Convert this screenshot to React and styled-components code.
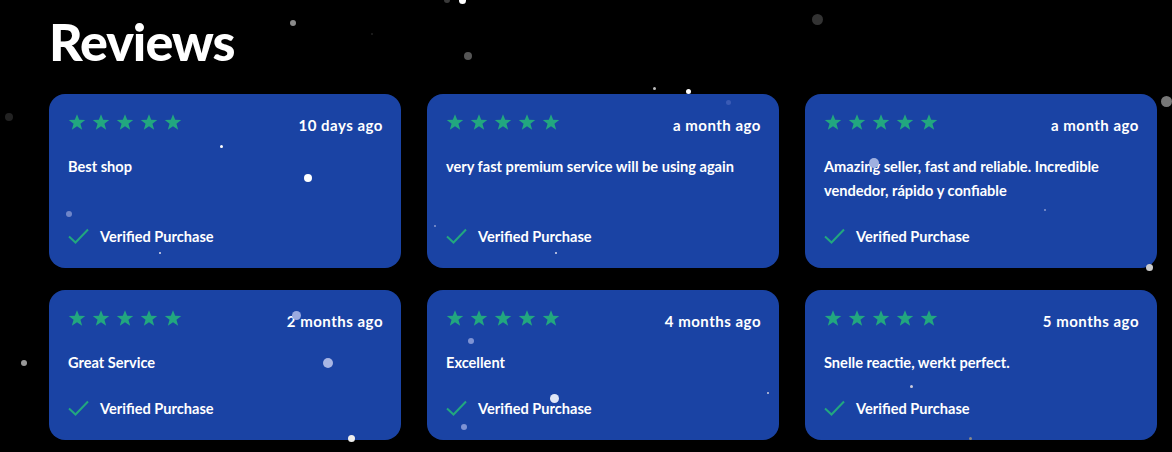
import React from "react";
import styled, { createGlobalStyle } from "styled-components";

const GlobalStyle = createGlobalStyle`
  html, body {
    margin: 0;
    background: #000;
  }
  body {
    font-family: "Lato", "Liberation Sans", sans-serif;
    color: #fff;
  }
`;

const reviews = [
  { date: "10 days ago", text: "Best shop" },
  { date: "a month ago", text: "very fast premium service will be using again" },
  { date: "a month ago", text: "Amazing seller, fast and reliable. Incredible vendedor, rápido y confiable" },
  { date: "2 months ago", text: "Great Service" },
  { date: "4 months ago", text: "Excellent" },
  { date: "5 months ago", text: "Snelle reactie, werkt perfect." },
];

// x, y, size, colour of the floating particles
const dots = [
  [293, 23, 6, "#8a8a8a"], [447, 0, 6, "#3a3a3a"], [462, 0, 7, "#fff"],
  [468, 56, 8, "#555"], [817, 19, 11, "#333"], [9, 117, 8, "#222"],
  [221, 146, 3, "#fff"], [308, 178, 8, "#fff"], [69, 214, 6, "#6f86c9"],
  [160, 253, 2, "#dde"], [654, 88, 3, "#bbb"], [688, 91, 5, "#fff"],
  [728, 102, 5, "#3a5bb5"], [874, 163, 10, "#9fb0e0"], [1166, 101, 11, "#777"],
  [1149, 267, 7, "#ccc"], [1045, 210, 2, "#8898d0"], [556, 253, 2, "#dde"],
  [296, 315, 9, "#9aaae0"], [328, 363, 10, "#a8b6e4"], [24, 363, 6, "#999"],
  [351, 438, 7, "#eee"], [471, 341, 6, "#7e93d4"], [554, 398, 9, "#dfe6f7"],
  [464, 427, 6, "#7e93d4"], [768, 393, 2, "#ccd"], [911, 386, 3, "#ccd"],
  [970, 438, 3, "#888"], [435, 226, 2, "#8898d0"], [372, 34, 2, "#222"],
];

const Page = styled.div`
  position: relative;
  min-height: 452px;
  padding: 10px 15px 0 49px;
  box-sizing: border-box;
  overflow: hidden;
`;

const Title = styled.h1`
  margin: 0 0 22px;
  font-size: 52px;
  line-height: 62px;
  font-weight: 900;
  letter-spacing: -1px;
  color: #fff;
`;

const Grid = styled.div`
  display: grid;
  grid-template-columns: repeat(3, 352px);
  column-gap: 26px;
  row-gap: 22px;
`;

const Card = styled.div`
  display: flex;
  flex-direction: column;
  padding: 18px 18px 22px 19px;
  border-radius: 16px;
  background: #1a43a4;
`;

const Header = styled.div`
  display: flex;
  align-items: center;
  justify-content: space-between;
  height: 20px;
`;

const Stars = styled.div`
  display: flex;
  gap: 6px;
`;

const DateText = styled.span`
  font-size: 15px;
  font-weight: 700;
  letter-spacing: 0.5px;
  margin-top: 5px;
`;

const Body = styled.p`
  margin: 23px 0 23px;
  font-size: 14.6px;
  line-height: 24px;
  font-weight: 700;
`;

const Verified = styled.div`
  display: flex;
  align-items: center;
  gap: 11px;
  margin-top: auto;
  height: 20px;
  font-size: 14.6px;
  font-weight: 700;
`;

const Dot = styled.span`
  position: absolute;
  border-radius: 50%;
  pointer-events: none;
`;

const Star = () => (
  <svg width="18" height="18" viewBox="0 0 24 24">
    <path
      fill="#22a77f"
      d="M12 1.5l2.9 7.6 8.1.3-6.4 5 2.3 7.9L12 17.7l-6.9 4.6 2.3-7.9-6.4-5 8.1-.3z"
    />
  </svg>
);

const Check = () => (
  <svg width="21" height="16" viewBox="0 0 21 16">
    <path d="M1 8.5l6.5 6L20 1.5" fill="none" stroke="#22a77f" strokeWidth="2" />
  </svg>
);

export default function App() {
  return (
    <Page>
      <GlobalStyle />
      <Title>Reviews</Title>
      <Grid>
        {reviews.map((r, i) => (
          <Card key={i}>
            <Header>
              <Stars>
                {[0, 1, 2, 3, 4].map((s) => (
                  <Star key={s} />
                ))}
              </Stars>
              <DateText>{r.date}</DateText>
            </Header>
            <Body>{r.text}</Body>
            <Verified>
              <Check />
              Verified Purchase
            </Verified>
          </Card>
        ))}
      </Grid>
      {dots.map(([x, y, s, c], i) => (
        <Dot
          key={i}
          style={{ left: x - s / 2, top: y - s / 2, width: s, height: s, background: c }}
        />
      ))}
    </Page>
  );
}
